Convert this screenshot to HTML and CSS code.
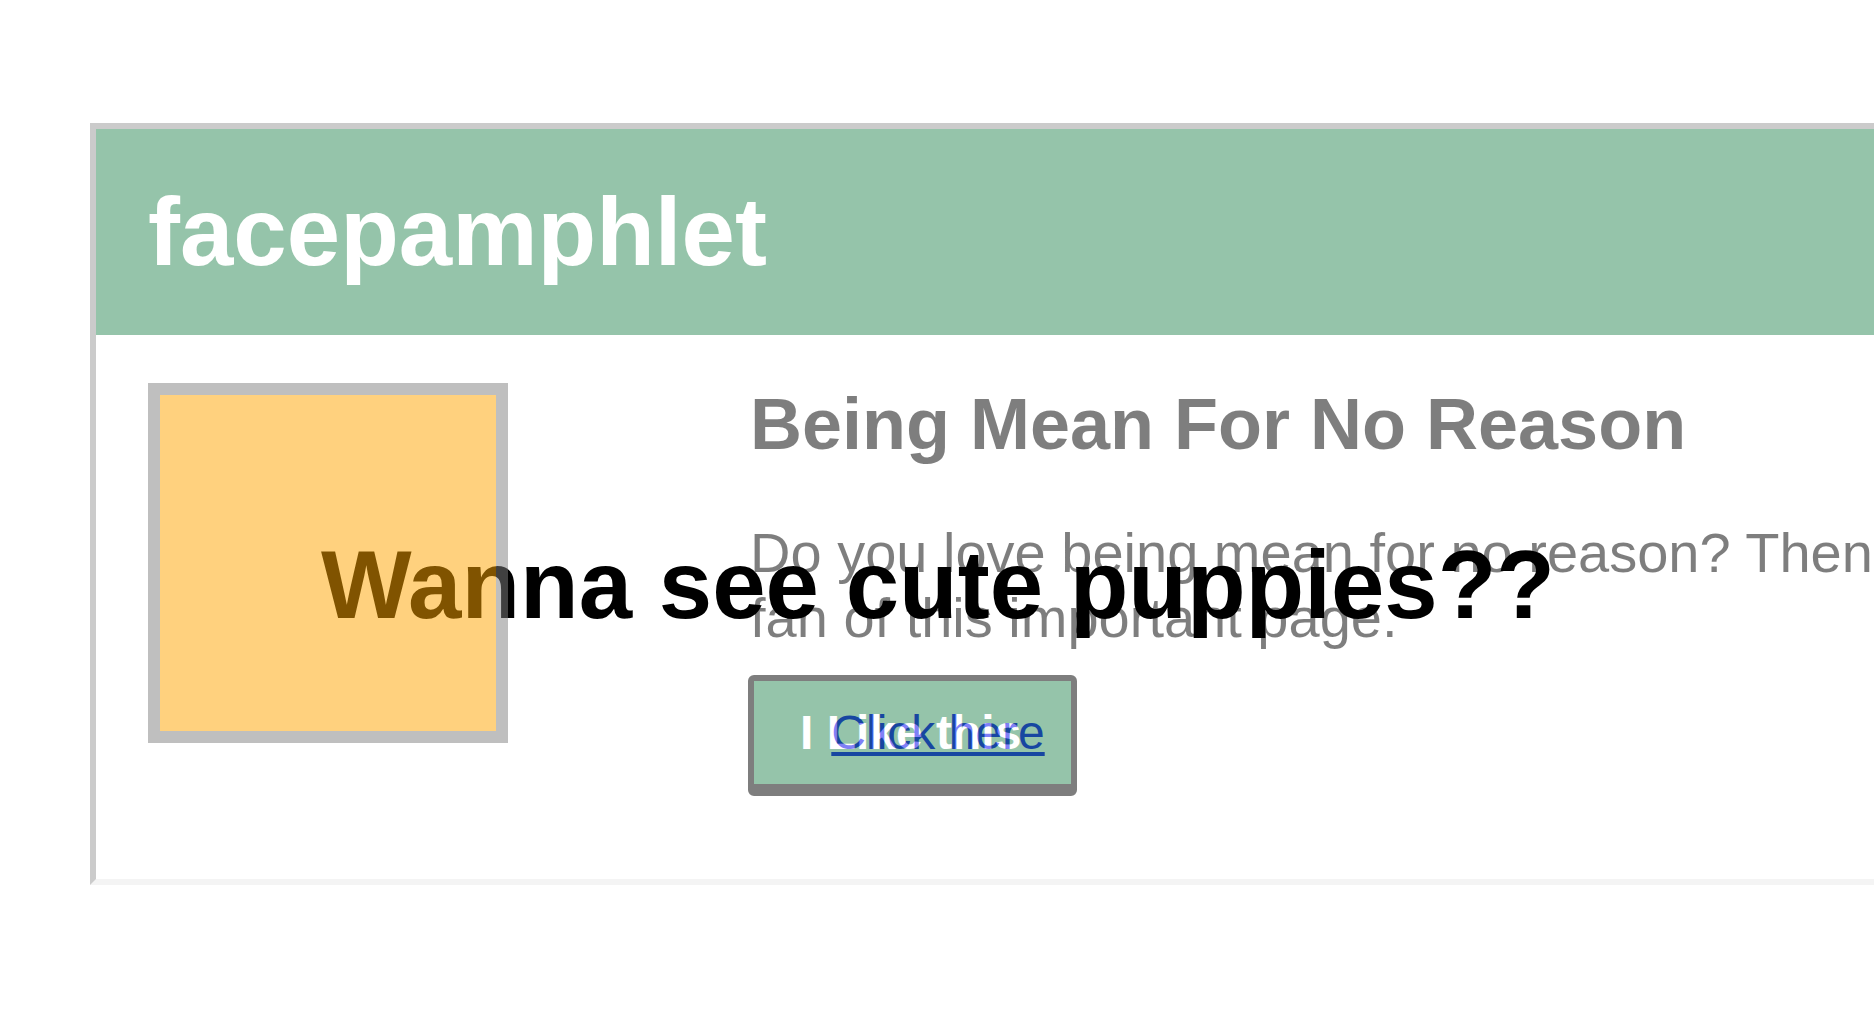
FILE: index.html
```html
<!DOCTYPE html>
<html lang="en">
<head>
<meta charset="utf-8">
<title>Wanna see cute puppies??</title>
<link rel="stylesheet" href="styles.css">
</head>
<body>
  <main class="bait">
    <h1 class="bait-title">Wanna see cute puppies??</h1>
    <p class="bait-link-row"><a href="#" class="bait-link">Click here</a></p>
  </main>

  <div class="frame">
    <div class="card">
      <header class="card-header">
        <h1 class="brand">facepamphlet</h1>
      </header>
      <div class="card-body">
        <div class="avatar"></div>
        <div class="info">
          <h2 class="page-title">Being Mean For No Reason</h2>
          <p class="page-desc">Do you love being mean for no reason? Then become a fan of this important page.</p>
          <button class="like-btn" type="button">I Like this</button>
        </div>
      </div>
    </div>
  </div>
</body>
</html>
```

FILE: styles.css
```css
html, body {
  margin: 0;
  height: 100%;
  background: #ffffff;
}

body {
  position: relative;
  overflow: hidden;
  font-family: "Liberation Sans", Arial, Helvetica, sans-serif;
}

/* attacker page underneath */
.bait {
  padding-top: 530px;
  text-align: center;
}

.bait-title {
  margin: 0;
  font-size: 96px;
  font-weight: bold;
  line-height: normal;
  color: #000000;
}

.bait-link-row {
  margin: 65px 0 0;
  font-size: 48px;
  line-height: normal;
}

.bait-link {
  color: #0000ee;
}

/* semi-transparent framed page on top */
.frame {
  position: absolute;
  top: 0;
  left: 0;
  right: 2px;
  bottom: 0;
  overflow: hidden;
  opacity: 0.5;
}

.card {
  margin: 123px 0 0 90px;
  border-left: 6px solid #999999;
  border-top: 6px solid #999999;
  border-bottom: 6px solid #ebebeb;
}

.card-header {
  background: #2e8b57;
  padding: 48px 52px;
}

.brand {
  margin: 0;
  font-size: 96px;
  line-height: 110px;
  font-weight: bold;
  color: #ffffff;
}

.card-body {
  display: flex;
  align-items: flex-start;
  gap: 240px;
  padding: 48px 52px 83px;
}

.avatar {
  flex: none;
  width: 336px;
  height: 336px;
  border: 12px solid #808080;
  background: #ffa500;
}

.info {
  flex: none;
  width: 1430px;
  display: flex;
  flex-direction: column;
  align-items: flex-start;
}

.page-title {
  margin: 0 0 0 2px;
  font-size: 72px;
  font-weight: bold;
  line-height: normal;
  color: #000000;
}

.page-desc {
  margin: 55px 0 0 2px;
  font-size: 56px;
  line-height: normal;
  color: #000000;
}

.like-btn {
  margin-top: 25px;
  font-family: "Liberation Sans", Arial, Helvetica, sans-serif;
  font-size: 48px;
  font-weight: bold;
  line-height: normal;
  color: #ffffff;
  background: #2e8b57;
  border: 6px solid #000000;
  border-bottom-width: 12px;
  border-radius: 6px;
  padding: 24px 50px 24px 46px;
}
```
